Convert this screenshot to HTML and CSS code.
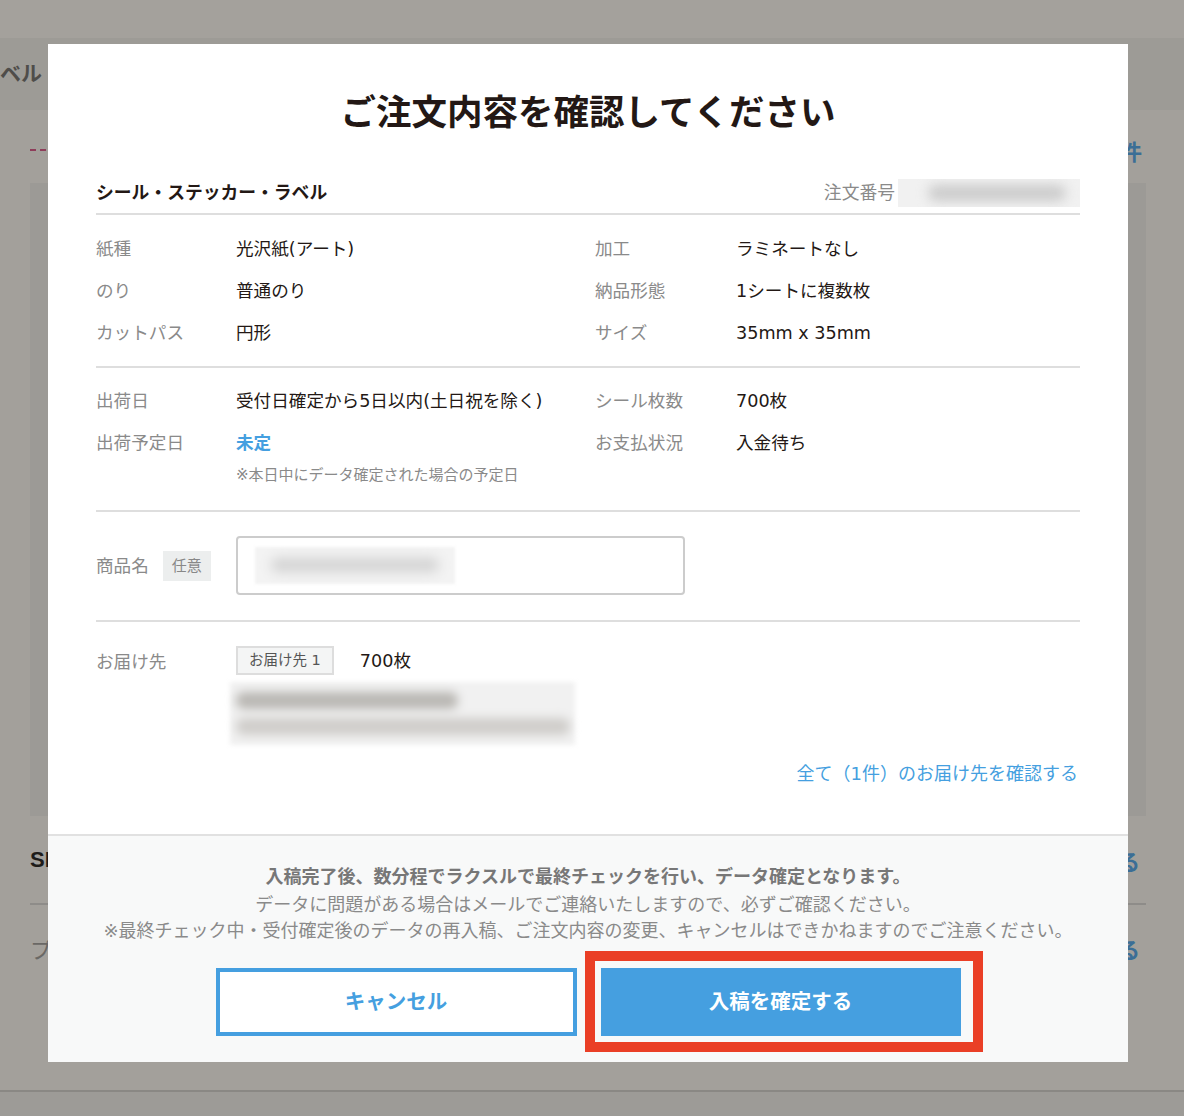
FILE: index.html
```html
<!DOCTYPE html>
<html lang="ja">
<head>
<meta charset="utf-8">
<title>ご注文内容を確認してください</title>
<link rel="stylesheet" href="styles.css">
</head>
<body>
<div class="page">
  <div class="page-top"></div>
  <div class="page-header"><span class="page-title">ベル</span></div>
  <div class="page-sub"><span class="dash"></span><span class="count">件</span></div>
  <div class="page-panel"></div>
  <div class="page-row first"><span class="row-l strong">SI</span><span class="row-r">る</span></div>
  <div class="page-row second"><span class="row-l">プ</span><span class="row-r">る</span></div>
  <div class="page-spacer"></div>
  <div class="page-bottom"></div>
</div>

<div class="modal">
  <div class="modal-body">
    <h1 class="modal-title">ご注文内容を確認してください</h1>

    <div class="order-head">
      <span class="product">シール・ステッカー・ラベル</span>
      <span class="order-no"><span class="order-label">注文番号</span><span class="redact order-redact"><span class="redact-bar"></span></span></span>
    </div>

    <div class="section grid spec">
      <span class="lbl">紙種</span><span class="val">光沢紙(アート)</span>
      <span class="lbl">加工</span><span class="val">ラミネートなし</span>
      <span class="lbl">のり</span><span class="val">普通のり</span>
      <span class="lbl">納品形態</span><span class="val">1シートに複数枚</span>
      <span class="lbl">カットパス</span><span class="val">円形</span>
      <span class="lbl">サイズ</span><span class="val">35mm x 35mm</span>
    </div>

    <div class="section grid ship">
      <span class="lbl">出荷日</span><span class="val">受付日確定から5日以内(土日祝を除く)</span>
      <span class="lbl">シール枚数</span><span class="val">700枚</span>
      <span class="lbl">出荷予定日</span>
      <span class="val"><span class="undecided">未定</span><span class="note">※本日中にデータ確定された場合の予定日</span></span>
      <span class="lbl">お支払状況</span><span class="val">入金待ち</span>
    </div>

    <div class="section name-row">
      <span class="lbl name-lbl">商品名<span class="optional">任意</span></span>
      <div class="input"><span class="redact input-redact"><span class="redact-bar"></span></span></div>
    </div>

    <div class="dest">
      <div class="dest-row">
        <span class="lbl">お届け先</span>
        <div class="dest-val">
          <div class="dest-line"><span class="dest-badge">お届け先 1</span><span class="dest-qty">700枚</span></div>
          <div class="address"><span class="addr-bar a1"></span><span class="addr-bar a2"></span></div>
        </div>
      </div>
      <div class="dest-link"><a class="link">全て（1件）のお届け先を確認する</a></div>
    </div>
  </div>

  <div class="modal-footer">
    <p class="notice strong-notice">入稿完了後、数分程でラクスルで最終チェックを行い、データ確定となります。</p>
    <p class="notice">データに問題がある場合はメールでご連絡いたしますので、必ずご確認ください。</p>
    <p class="notice last">※最終チェック中・受付確定後のデータの再入稿、ご注文内容の変更、キャンセルはできかねますのでご注意ください。</p>
    <div class="actions">
      <button class="btn btn-cancel">キャンセル</button>
      <div class="confirm-wrap">
        <button class="btn btn-confirm">入稿を確定する</button>
        <span class="highlight"></span>
      </div>
    </div>
  </div>
</div>
</body>
</html>
```

FILE: styles.css
```css
* { box-sizing: border-box; margin: 0; padding: 0; }

html, body { width: 1184px; height: 1116px; overflow: hidden; }

body {
  background: #a3a09b;
  font-family: "DejaVu Sans", "Noto Sans CJK JP", sans-serif;
  position: relative;
  color: #222;
}

/* background page (dimmed) */
.page { display: flex; flex-direction: column; height: 1116px; }
.page-top { height: 38px; background: #a4a19c; }
.page-header {
  height: 72px;
  background: #9d9b96;
  display: flex;
  align-items: center;
}
.page-title { font-size: 21px; font-weight: bold; color: #4f4d4a; line-height: 1; }
.page-sub {
  height: 73px;
  display: flex;
  align-items: center;
  padding: 6px 42px 0 30px;
  gap: 20px;
}
.dash { flex: 1; border-top: 2px dashed #8e3d5a; }
.count { font-size: 22px; font-weight: bold; color: #3b6e96; }
.page-panel { height: 633px; margin: 0 38px 0 30px; background: #9c9a96; }
.page-row {
  margin: 0 38px 0 30px;
  display: flex;
  justify-content: space-between;
  align-items: center;
}
.page-row.first { height: 89px; border-bottom: 2px solid #8e8c89; }
.page-row.second { height: 86px; }
.row-l { font-size: 22px; color: #6a6865; }
.row-l.strong { color: #1e1c1a; font-weight: bold; font-family: "Liberation Sans", sans-serif; }
.row-r { font-size: 22px; font-weight: bold; color: #3b6e96; padding-right: 6px; }
.page-spacer { height: 99px; }
.page-bottom { flex: 1; border-top: 2px solid #8a8884; background: #9d9b97; }

/* modal */
.modal {
  position: absolute;
  left: 48px;
  top: 44px;
  width: 1080px;
  height: 1018px;
  background: #fff;
  display: flex;
  flex-direction: column;
}
.modal-body { flex: 1; padding: 0 48px; }
.modal-title {
  margin-top: 45px;
  font-size: 35.5px;
  line-height: 48px;
  font-weight: bold;
  text-align: center;
  color: #231815;
}

.order-head {
  margin-top: 42px;
  display: flex;
  justify-content: space-between;
  align-items: center;
  height: 36px;
  padding-bottom: 6px;
  border-bottom: 2px solid #dedede;
}
.product { font-size: 17.8px; font-weight: bold; color: #231815; line-height: 28px; }
.order-no { display: flex; align-items: center; gap: 3px; }
.order-label { font-size: 17.8px; color: #8a8a8a; line-height: 28px; }

.redact { display: block; background: #f1f1f1; overflow: hidden; }
.redact-bar { display: block; background: #c4c4c4; filter: blur(6px); border-radius: 10px; }
.order-redact { width: 182px; height: 28px; padding: 6px 14px 6px 30px; }
.order-redact .redact-bar { height: 16px; background: #cbcbcb; }

.section { border-bottom: 2px solid #dedede; }
.grid {
  display: grid;
  grid-template-columns: 140px 359px 141px 1fr;
  align-items: start;
}
.lbl { font-size: 17.6px; color: #8a8a8a; line-height: 42px; }
.val { font-size: 17.6px; color: #231815; line-height: 42px; }
.spec { padding: 13px 0 12px; }
.ship { padding: 12px 0 24px; }
.undecided { display: block; color: #459fe0; font-weight: bold; }
.note { display: block; font-size: 15px; line-height: 22px; color: #8a8a8a; }

.name-row {
  padding: 24px 0 25px;
  display: flex;
  align-items: center;
}
.name-lbl { width: 140px; display: flex; align-items: center; gap: 14px; line-height: 30px; }
.optional {
  background: #eceeee;
  color: #888;
  font-size: 15px;
  line-height: 30px;
  padding: 0 9px;
}
.input {
  width: 449px;
  height: 59px;
  border: 2px solid #cccccc;
  border-radius: 4px;
  padding: 9px 0 0 17px;
}
.input-redact { width: 200px; height: 37px; background: #f3f3f3; padding: 11px 16px; filter: blur(1.5px); }
.input-redact .redact-bar { height: 14px; background: #d2d2d2; }

.dest { padding-top: 24px; }
.dest-row { display: flex; align-items: flex-start; }
.dest-row .lbl { width: 140px; line-height: 29px; padding-top: 2px; }
.dest-line { display: flex; align-items: center; height: 29px; }
.dest-badge {
  height: 29px;
  border: 2px solid #dddddd;
  background: #f4f5f5;
  font-size: 14.5px;
  color: #555;
  line-height: 25px;
  padding: 0 11px;
}
.dest-qty { margin-left: 26px; font-size: 17.6px; color: #231815; padding-bottom: 3px; }
.address {
  margin-top: 7px;
  margin-left: -6px;
  width: 345px;
  height: 63px;
  background: #f1f1f1;
  filter: blur(2px);
  display: flex;
  flex-direction: column;
  justify-content: center;
  gap: 9px;
  padding: 0 0 0 6px;
}
.addr-bar { display: block; height: 17px; filter: blur(4px); border-radius: 8px; }
.addr-bar.a1 { width: 222px; background: #b9b7b3; }
.addr-bar.a2 { width: 334px; background: #cfcdca; }

.dest-link { margin-top: 15px; text-align: right; line-height: 28px; }
.link { font-size: 18px; color: #459fe0; text-decoration: none; padding-right: 2px; }

.modal-footer {
  height: 228px;
  border-top: 2px solid #e1e1e1;
  background: #f8f9f9;
  padding-top: 27px;
  text-align: center;
}
.notice { font-size: 18px; line-height: 27px; color: #8a8a8a; }
.notice.last { line-height: 26px; }
.strong-notice { font-weight: bold; color: #777; line-height: 28px; }

.actions {
  margin-top: 24px;
  display: flex;
  justify-content: center;
  gap: 24px;
}
.btn {
  height: 68px;
  font-family: "Noto Sans CJK JP", sans-serif;
  font-size: 20.5px;
  font-weight: bold;
  cursor: pointer;
  padding-bottom: 5px;
}
.btn-cancel {
  width: 361px;
  background: #fff;
  color: #459fe0;
  border: 4px solid #459fe0;
}
.confirm-wrap { position: relative; }
.btn-confirm {
  width: 360px;
  background: #459fe0;
  color: #fff;
  border: none;
}
.highlight {
  position: absolute;
  left: -16px;
  top: -17px;
  right: -22px;
  bottom: -16px;
  border: 10px solid #ea3f26;
  pointer-events: none;
}
```
